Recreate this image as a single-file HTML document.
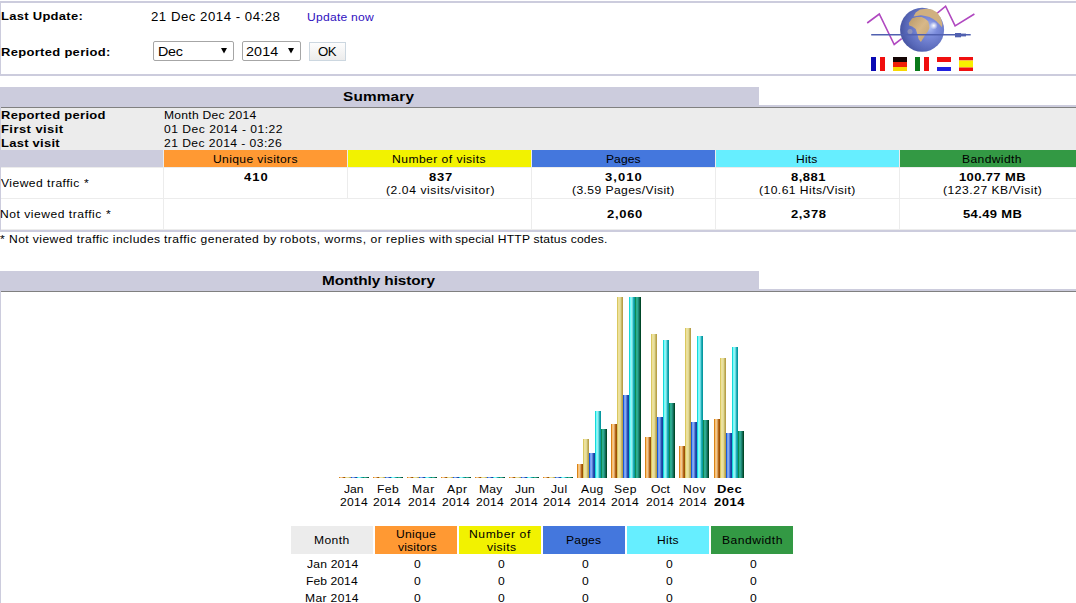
<!DOCTYPE html>
<html><head><meta charset="utf-8">
<style>
html,body{margin:0;padding:0;background:#fff;width:1076px;height:603px;overflow:hidden;position:relative}
div,span{box-sizing:border-box}
.a{position:absolute}
.t{position:absolute;white-space:pre;font-family:"Liberation Sans",sans-serif;font-size:11px;line-height:13px;color:#000}
.b{font-weight:bold}
.c{text-align:center}
.bar{position:absolute;width:6px}
.o{background:linear-gradient(to right,#d88418 0 1px,#ffc070 1px 2px,#f0c890 2px 3px,#d8a060 3px 4px,#b86818 4px 5px,#9a5008 5px 6px)}
.y{background:linear-gradient(to right,#d8c860 0 1px,#f0e098 1px 2px,#e8e0a0 2px 3px,#e0d890 3px 4px,#c8b868 4px 5px,#b8a048 5px 6px)}
.p{background:linear-gradient(to right,#1858d8 0 1px,#70a0f8 1px 2px,#88a8f0 2px 3px,#5880d8 3px 4px,#2850b0 4px 5px,#1840a0 5px 6px)}
.h{background:linear-gradient(to right,#18d8d8 0 1px,#70ffff 1px 2px,#98f0f0 2px 3px,#68d8e0 3px 4px,#20b0b8 4px 5px,#0898a0 5px 6px)}
.g{background:linear-gradient(to right,#108850 0 1px,#28b090 1px 2px,#30a890 2px 3px,#208878 3px 4px,#106850 4px 5px,#004828 5px 6px)}
</style></head><body>

<!-- ===== top box ===== -->
<div class="a" style="left:0;top:1px;width:1076px;height:75px;background:#ccccdd"></div>
<div class="a" style="left:1px;top:3px;width:1075px;height:71px;background:#fff"></div>
<!-- selects -->
<div class="a" style="left:153px;top:41px;width:81px;height:20px;border:1px solid #a6a6a6;border-radius:2px;background:#fff"></div>
<svg class="a" style="left:221px;top:48px" width="6" height="6"><path d="M0 0H6L3 5.5Z" fill="#000"/></svg>
<div class="a" style="left:242px;top:41px;width:59px;height:20px;border:1px solid #a6a6a6;border-radius:2px;background:#fff"></div>
<svg class="a" style="left:288px;top:48px" width="6" height="6"><path d="M0 0H6L3 5.5Z" fill="#000"/></svg>
<div class="a" style="left:309px;top:42px;width:37px;height:19px;border:1px solid #ccd7e0;background:linear-gradient(#fdfdfd,#ececec)"></div>

<!-- logo -->
<svg class="a" style="left:860px;top:0" width="120" height="75" viewBox="0 0 120 75">
  <defs>
    <radialGradient id="gl" cx="0.66" cy="0.45" r="0.75">
      <stop offset="0" stop-color="#b0c0f4"/>
      <stop offset="0.25" stop-color="#7c8cdc"/>
      <stop offset="0.7" stop-color="#5868b8"/>
      <stop offset="1" stop-color="#3c4894"/>
    </radialGradient>
    <radialGradient id="hl" cx="0.5" cy="0.5" r="0.5">
      <stop offset="0" stop-color="#ffffff" stop-opacity="1"/>
      <stop offset="1" stop-color="#ffffff" stop-opacity="0"/>
    </radialGradient>
    <linearGradient id="tan" x1="0" y1="0" x2="1" y2="1">
      <stop offset="0" stop-color="#b89868"/>
      <stop offset="0.5" stop-color="#d8b888"/>
      <stop offset="1" stop-color="#c0a070"/>
    </linearGradient>
  </defs>
  <polyline points="7.2,23 19.3,14 34.2,44.5 41.7,38.6" fill="none" stroke="#b048c0" stroke-width="1.6"/>
  <polyline points="77,13.4 85.6,6.2 95.1,25.9 114.4,14" fill="none" stroke="#b048c0" stroke-width="1.6"/>
  <circle cx="62.1" cy="29.8" r="22" fill="url(#gl)"/>
  <path d="M48.8,23 L52.2,18.2 56.6,16.9 61.7,16.9 65.2,18.7 68.2,21.2 69.1,24.7 69.5,28.1 67.8,31.6 65.2,35 62.6,39.3 60.9,41.9 58.7,39.3 57.4,34.2 55.7,29 52.2,26.4 49.2,25.6Z" fill="url(#tan)"/>
  <path d="M53.5,16.5 L55.7,12.6 60,9.6 66,8.7 72,9.6 77.2,12.6 80.7,17.8 82.4,23.8 82,27.3 79.8,24.7 76.4,21.2 72.9,18.7 69.5,16.9 65.2,16.1 60.9,15.2 56.6,16.1Z" fill="#d0b080"/>
  <circle cx="73.8" cy="25.6" r="4" fill="url(#hl)"/>
  <circle cx="50" cy="31.6" r="2.5" fill="#a0a0b8" opacity="0.7"/>
  <line x1="11.2" y1="34.7" x2="110.7" y2="34.7" stroke="#5060b0" stroke-width="1.5"/>
  <rect x="95" y="33" width="6" height="4.3" fill="#5060b0"/>
  <rect x="101" y="33.6" width="5" height="2.8" fill="#5060b0"/>
  <!-- flags -->
  <rect x="11" y="57" width="5" height="14" fill="#0a0ab4"/><rect x="20" y="57" width="5" height="14" fill="#f00e0e"/>
  <rect x="33" y="57" width="14" height="5" fill="#140404"/><rect x="33" y="62" width="14" height="5" fill="#f02008"/><rect x="33" y="67" width="14" height="4" fill="#f8d800"/>
  <rect x="55" y="57" width="5" height="14" fill="#0a7a1a"/><rect x="64" y="57" width="5" height="14" fill="#f00e0e"/>
  <rect x="77" y="57" width="14" height="5" fill="#f01010"/><rect x="77" y="67" width="14" height="4" fill="#2020e0"/>
  <rect x="99" y="57" width="14" height="3.5" fill="#f01010"/><rect x="99" y="60.5" width="14" height="7" fill="#f8f000"/><rect x="99" y="67.5" width="14" height="3.5" fill="#f01010"/>
</svg>

<!-- ===== summary ===== -->
<div class="a" style="left:0;top:87px;width:759px;height:20px;background:#ccccdd"></div>
<div class="a" style="left:0;top:105px;width:1076px;height:2px;background:#ccccdd"></div>
<div class="a" style="left:0;top:107px;width:1076px;height:125px;background:#ccccdd"></div>
<div class="a" style="left:1px;top:107px;width:1075px;height:1px;background:#808080"></div>
<div class="a" style="left:1px;top:108px;width:1075px;height:122px;background:#ececec"></div>
<!-- header row -->
<div class="a" style="left:1px;top:150px;width:162px;height:17px;background:#ccccdd"></div>
<div class="a" style="left:164px;top:150px;width:183px;height:17px;background:#ff9933"></div>
<div class="a" style="left:348px;top:150px;width:183px;height:17px;background:#f2f200"></div>
<div class="a" style="left:532px;top:150px;width:183px;height:17px;background:#4477dd"></div>
<div class="a" style="left:716px;top:150px;width:183px;height:17px;background:#66eeff"></div>
<div class="a" style="left:900px;top:150px;width:176px;height:17px;background:#339944"></div>
<!-- white rows -->
<div class="a" style="left:1px;top:168px;width:162px;height:30px;background:#fff"></div>
<div class="a" style="left:164px;top:168px;width:183px;height:30px;background:#fff"></div>
<div class="a" style="left:348px;top:168px;width:183px;height:30px;background:#fff"></div>
<div class="a" style="left:532px;top:168px;width:183px;height:30px;background:#fff"></div>
<div class="a" style="left:716px;top:168px;width:183px;height:30px;background:#fff"></div>
<div class="a" style="left:900px;top:168px;width:176px;height:30px;background:#fff"></div>
<div class="a" style="left:1px;top:199px;width:162px;height:30px;background:#fff"></div>
<div class="a" style="left:164px;top:199px;width:367px;height:30px;background:#fff"></div>
<div class="a" style="left:532px;top:199px;width:183px;height:30px;background:#fff"></div>
<div class="a" style="left:716px;top:199px;width:183px;height:30px;background:#fff"></div>
<div class="a" style="left:900px;top:199px;width:176px;height:30px;background:#fff"></div>




<!-- ===== monthly history ===== -->
<div class="a" style="left:0;top:271px;width:759px;height:20px;background:#ccccdd"></div>
<div class="a" style="left:0;top:289px;width:1076px;height:314px;background:#ccccdd"></div>
<div class="a" style="left:1px;top:291px;width:1075px;height:1px;background:#808080"></div>
<div class="a" style="left:1px;top:292px;width:1075px;height:311px;background:#fff"></div>

<div id="bars">
<div class="bar o" style="left:339px;top:477px;height:1px"></div>
<div class="bar y" style="left:345px;top:477px;height:1px"></div>
<div class="bar p" style="left:351px;top:477px;height:1px"></div>
<div class="bar h" style="left:357px;top:477px;height:1px"></div>
<div class="bar g" style="left:363px;top:477px;height:1px"></div>
<div class="bar o" style="left:373px;top:477px;height:1px"></div>
<div class="bar y" style="left:379px;top:477px;height:1px"></div>
<div class="bar p" style="left:385px;top:477px;height:1px"></div>
<div class="bar h" style="left:391px;top:477px;height:1px"></div>
<div class="bar g" style="left:397px;top:477px;height:1px"></div>
<div class="bar o" style="left:407px;top:477px;height:1px"></div>
<div class="bar y" style="left:413px;top:477px;height:1px"></div>
<div class="bar p" style="left:419px;top:477px;height:1px"></div>
<div class="bar h" style="left:425px;top:477px;height:1px"></div>
<div class="bar g" style="left:431px;top:477px;height:1px"></div>
<div class="bar o" style="left:441px;top:477px;height:1px"></div>
<div class="bar y" style="left:447px;top:477px;height:1px"></div>
<div class="bar p" style="left:453px;top:477px;height:1px"></div>
<div class="bar h" style="left:459px;top:477px;height:1px"></div>
<div class="bar g" style="left:465px;top:477px;height:1px"></div>
<div class="bar o" style="left:475px;top:477px;height:1px"></div>
<div class="bar y" style="left:481px;top:477px;height:1px"></div>
<div class="bar p" style="left:487px;top:477px;height:1px"></div>
<div class="bar h" style="left:493px;top:477px;height:1px"></div>
<div class="bar g" style="left:499px;top:477px;height:1px"></div>
<div class="bar o" style="left:509px;top:477px;height:1px"></div>
<div class="bar y" style="left:515px;top:477px;height:1px"></div>
<div class="bar p" style="left:521px;top:477px;height:1px"></div>
<div class="bar h" style="left:527px;top:477px;height:1px"></div>
<div class="bar g" style="left:533px;top:477px;height:1px"></div>
<div class="bar o" style="left:543px;top:477px;height:1px"></div>
<div class="bar y" style="left:549px;top:477px;height:1px"></div>
<div class="bar p" style="left:555px;top:477px;height:1px"></div>
<div class="bar h" style="left:561px;top:477px;height:1px"></div>
<div class="bar g" style="left:567px;top:477px;height:1px"></div>
<div class="bar o" style="left:577px;top:464px;height:14px"></div>
<div class="bar y" style="left:583px;top:439px;height:39px"></div>
<div class="bar p" style="left:589px;top:453px;height:25px"></div>
<div class="bar h" style="left:595px;top:411px;height:67px"></div>
<div class="bar g" style="left:601px;top:429px;height:49px"></div>
<div class="bar o" style="left:611px;top:424px;height:54px"></div>
<div class="bar y" style="left:617px;top:297px;height:181px"></div>
<div class="bar p" style="left:623px;top:395px;height:83px"></div>
<div class="bar h" style="left:629px;top:297px;height:181px"></div>
<div class="bar g" style="left:635px;top:297px;height:181px"></div>
<div class="bar o" style="left:645px;top:437px;height:41px"></div>
<div class="bar y" style="left:651px;top:334px;height:144px"></div>
<div class="bar p" style="left:657px;top:417px;height:61px"></div>
<div class="bar h" style="left:663px;top:340px;height:138px"></div>
<div class="bar g" style="left:669px;top:403px;height:75px"></div>
<div class="bar o" style="left:679px;top:446px;height:32px"></div>
<div class="bar y" style="left:685px;top:328px;height:150px"></div>
<div class="bar p" style="left:691px;top:422px;height:56px"></div>
<div class="bar h" style="left:697px;top:336px;height:142px"></div>
<div class="bar g" style="left:703px;top:420px;height:58px"></div>
<div class="bar o" style="left:714px;top:419px;height:59px"></div>
<div class="bar y" style="left:720px;top:358px;height:120px"></div>
<div class="bar p" style="left:726px;top:433px;height:45px"></div>
<div class="bar h" style="left:732px;top:347px;height:131px"></div>
<div class="bar g" style="left:738px;top:431px;height:47px"></div>
</div>


<!-- bottom table -->
<div class="a" style="left:291px;top:526px;width:82px;height:28px;background:#ececec"></div>
<div class="a" style="left:375px;top:526px;width:82px;height:28px;background:#ff9933"></div>
<div class="a" style="left:459px;top:526px;width:82px;height:28px;background:#f2f200"></div>
<div class="a" style="left:543px;top:526px;width:82px;height:28px;background:#4477dd"></div>
<div class="a" style="left:627px;top:526px;width:82px;height:28px;background:#66eeff"></div>
<div class="a" style="left:711px;top:526px;width:82px;height:28px;background:#339944"></div>

<div class="t" style="left:1.00px;top:10px;font-size:11px;line-height:13px;font-weight:bold;letter-spacing:0.244px;transform:scaleX(1.18);transform-origin:0 0;">Last Update:</div>
<div class="t" style="left:151.00px;top:10px;font-size:12px;line-height:14px;letter-spacing:0.467px;transform:scaleX(1.1);transform-origin:0 0;">21 Dec 2014 - 04:28</div>
<div class="t" style="left:307.10px;top:11px;font-size:11px;line-height:13px;letter-spacing:0.218px;transform:scaleX(1.1);transform-origin:0 0;color:#3010c0">Update now</div>
<div class="t" style="left:1.00px;top:46px;font-size:11px;line-height:13px;font-weight:bold;letter-spacing:0.264px;transform:scaleX(1.18);transform-origin:0 0;">Reported period:</div>
<div class="t" style="left:157.60px;top:44px;font-size:13px;line-height:15px;letter-spacing:-0.280px;transform:scaleX(1.1);transform-origin:0 0;">Dec</div>
<div class="t" style="left:246.30px;top:44px;font-size:13px;line-height:15px;letter-spacing:0.147px;transform:scaleX(1.1);transform-origin:0 0;">2014</div>
<div class="t" style="left:318.00px;top:45px;font-size:12px;line-height:14px;letter-spacing:-0.440px;transform:scaleX(1.1);transform-origin:0 0;">OK</div>
<div class="t" style="left:343.00px;top:89px;font-size:13px;line-height:15px;font-weight:bold;letter-spacing:0.147px;transform:scaleX(1.18);transform-origin:0 0;">Summary</div>
<div class="t" style="left:322.30px;top:273px;font-size:13px;line-height:15px;font-weight:bold;letter-spacing:-0.074px;transform:scaleX(1.18);transform-origin:0 0;">Monthly history</div>
<div class="t" style="left:1.00px;top:109px;font-size:11px;line-height:13px;font-weight:bold;letter-spacing:0.257px;transform:scaleX(1.18);transform-origin:0 0;">Reported period</div>
<div class="t" style="left:1.00px;top:123px;font-size:11px;line-height:13px;font-weight:bold;letter-spacing:0.376px;transform:scaleX(1.18);transform-origin:0 0;">First visit</div>
<div class="t" style="left:1.00px;top:137px;font-size:11px;line-height:13px;font-weight:bold;letter-spacing:0.218px;transform:scaleX(1.18);transform-origin:0 0;">Last visit</div>
<div class="t" style="left:164.00px;top:109px;font-size:11px;line-height:13px;letter-spacing:0.237px;transform:scaleX(1.1);transform-origin:0 0;">Month Dec 2014</div>
<div class="t" style="left:164.00px;top:123px;font-size:11px;line-height:13px;letter-spacing:0.449px;transform:scaleX(1.1);transform-origin:0 0;">01 Dec 2014 - 01:22</div>
<div class="t" style="left:164.00px;top:137px;font-size:11px;line-height:13px;letter-spacing:0.404px;transform:scaleX(1.1);transform-origin:0 0;">21 Dec 2014 - 03:26</div>
<div class="t" style="left:213.10px;top:153px;font-size:11px;line-height:13px;letter-spacing:0.337px;transform:scaleX(1.1);transform-origin:0 0;">Unique visitors</div>
<div class="t" style="left:392.40px;top:153px;font-size:11px;line-height:13px;letter-spacing:0.413px;transform:scaleX(1.1);transform-origin:0 0;">Number of visits</div>
<div class="t" style="left:606.30px;top:153px;font-size:11px;line-height:13px;letter-spacing:0.040px;transform:scaleX(1.1);transform-origin:0 0;">Pages</div>
<div class="t" style="left:796.30px;top:153px;font-size:11px;line-height:13px;letter-spacing:0.147px;transform:scaleX(1.1);transform-origin:0 0;">Hits</div>
<div class="t" style="left:961.80px;top:153px;font-size:11px;line-height:13px;letter-spacing:0.340px;transform:scaleX(1.1);transform-origin:0 0;">Bandwidth</div>
<div class="t" style="left:0.80px;top:177px;font-size:11px;line-height:13px;letter-spacing:0.423px;transform:scaleX(1.1);transform-origin:0 0;">Viewed traffic</div>
<div class="t" style="left:84.20px;top:177px;font-size:11px;line-height:13px;letter-spacing:0.000px;transform:scaleX(1.1);transform-origin:0 0;">*</div>
<div class="t" style="left:0.00px;top:208px;font-size:11px;line-height:13px;letter-spacing:0.465px;transform:scaleX(1.1);transform-origin:0 0;">Not viewed traffic</div>
<div class="t" style="left:106.30px;top:208px;font-size:11px;line-height:13px;letter-spacing:0.000px;transform:scaleX(1.1);transform-origin:0 0;">*</div>
<div class="t" style="left:244.00px;top:171px;font-size:11px;line-height:13px;font-weight:bold;letter-spacing:0.920px;transform:scaleX(1.18);transform-origin:0 0;">410</div>
<div class="t" style="left:428.70px;top:171px;font-size:11px;line-height:13px;font-weight:bold;letter-spacing:0.680px;transform:scaleX(1.18);transform-origin:0 0;">837</div>
<div class="t" style="left:385.60px;top:184px;font-size:11px;line-height:13px;letter-spacing:0.528px;transform:scaleX(1.1);transform-origin:0 0;">(2.04 visits/visitor)</div>
<div class="t" style="left:605.20px;top:171px;font-size:11px;line-height:13px;font-weight:bold;letter-spacing:0.880px;transform:scaleX(1.18);transform-origin:0 0;">3,010</div>
<div class="t" style="left:572.30px;top:184px;font-size:11px;line-height:13px;letter-spacing:0.379px;transform:scaleX(1.1);transform-origin:0 0;">(3.59 Pages/Visit)</div>
<div class="t" style="left:790.90px;top:171px;font-size:11px;line-height:13px;font-weight:bold;letter-spacing:0.400px;transform:scaleX(1.18);transform-origin:0 0;">8,881</div>
<div class="t" style="left:759.30px;top:184px;font-size:11px;line-height:13px;letter-spacing:0.416px;transform:scaleX(1.1);transform-origin:0 0;">(10.61 Hits/Visit)</div>
<div class="t" style="left:959.00px;top:171px;font-size:11px;line-height:13px;font-weight:bold;letter-spacing:0.320px;transform:scaleX(1.18);transform-origin:0 0;">100.77 MB</div>
<div class="t" style="left:942.50px;top:184px;font-size:11px;line-height:13px;letter-spacing:0.470px;transform:scaleX(1.1);transform-origin:0 0;">(123.27 KB/Visit)</div>
<div class="t" style="left:606.60px;top:208px;font-size:11px;line-height:13px;font-weight:bold;letter-spacing:0.600px;transform:scaleX(1.18);transform-origin:0 0;">2,060</div>
<div class="t" style="left:791.10px;top:208px;font-size:11px;line-height:13px;font-weight:bold;letter-spacing:0.520px;transform:scaleX(1.18);transform-origin:0 0;">2,378</div>
<div class="t" style="left:962.60px;top:208px;font-size:11px;line-height:13px;font-weight:bold;letter-spacing:0.314px;transform:scaleX(1.18);transform-origin:0 0;">54.49 MB</div>
<div class="t" style="left:0.00px;top:233px;font-size:11px;line-height:13px;letter-spacing:0.000px;transform:scaleX(1.1);transform-origin:0 0;">*</div>
<div class="t" style="left:9.40px;top:233px;font-size:11px;line-height:13px;letter-spacing:0.377px;transform:scaleX(1.1);transform-origin:0 0;">Not viewed traffic includes</div>
<div class="t" style="left:164.14px;top:233px;font-size:11px;line-height:13px;letter-spacing:0.433px;transform:scaleX(1.1);transform-origin:0 0;">traffic generated by</div>
<div class="t" style="left:279.66px;top:233px;font-size:11px;line-height:13px;letter-spacing:0.467px;transform:scaleX(1.1);transform-origin:0 0;">robots, worms, or replies with</div>
<div class="t" style="left:455.00px;top:233px;font-size:11px;line-height:13px;letter-spacing:0.193px;transform:scaleX(1.1);transform-origin:0 0;">special HTTP status codes.</div>
<div class="t" style="left:396.10px;top:528px;font-size:11px;line-height:13px;letter-spacing:0.232px;transform:scaleX(1.1);transform-origin:0 0;">Unique</div>
<div class="t" style="left:397.80px;top:541px;font-size:11px;line-height:13px;letter-spacing:0.154px;transform:scaleX(1.1);transform-origin:0 0;">visitors</div>
<div class="t" style="left:314.06px;top:534px;font-size:11px;line-height:13px;letter-spacing:0.360px;transform:scaleX(1.1);transform-origin:0 0;">Month</div>
<div class="t" style="left:469.06px;top:528px;font-size:11px;line-height:13px;letter-spacing:0.540px;transform:scaleX(1.1);transform-origin:0 0;">Number of</div>
<div class="t" style="left:486.64px;top:541px;font-size:11px;line-height:13px;letter-spacing:0.392px;transform:scaleX(1.1);transform-origin:0 0;">visits</div>
<div class="t" style="left:566.10px;top:534px;font-size:11px;line-height:13px;letter-spacing:0.160px;transform:scaleX(1.1);transform-origin:0 0;">Pages</div>
<div class="t" style="left:657.06px;top:534px;font-size:11px;line-height:13px;letter-spacing:0.253px;transform:scaleX(1.1);transform-origin:0 0;">Hits</div>
<div class="t" style="left:722.06px;top:534px;font-size:11px;line-height:13px;letter-spacing:0.440px;transform:scaleX(1.1);transform-origin:0 0;">Bandwidth</div>
<div class="t" style="left:344.19px;top:483px;font-size:11px;line-height:13px;letter-spacing:0.040px;transform:scaleX(1.1);transform-origin:0 0;">Jan</div>
<div class="t" style="left:339.64px;top:496px;font-size:11px;line-height:13px;letter-spacing:0.253px;transform:scaleX(1.1);transform-origin:0 0;">2014</div>
<div class="t" style="left:377.36px;top:483px;font-size:11px;line-height:13px;letter-spacing:0.360px;transform:scaleX(1.1);transform-origin:0 0;">Feb</div>
<div class="t" style="left:373.32px;top:496px;font-size:11px;line-height:13px;letter-spacing:0.253px;transform:scaleX(1.1);transform-origin:0 0;">2014</div>
<div class="t" style="left:411.54px;top:483px;font-size:11px;line-height:13px;letter-spacing:0.680px;transform:scaleX(1.1);transform-origin:0 0;">Mar</div>
<div class="t" style="left:407.80px;top:496px;font-size:11px;line-height:13px;letter-spacing:0.253px;transform:scaleX(1.1);transform-origin:0 0;">2014</div>
<div class="t" style="left:446.57px;top:483px;font-size:11px;line-height:13px;letter-spacing:0.600px;transform:scaleX(1.1);transform-origin:0 0;">Apr</div>
<div class="t" style="left:441.96px;top:496px;font-size:11px;line-height:13px;letter-spacing:0.253px;transform:scaleX(1.1);transform-origin:0 0;">2014</div>
<div class="t" style="left:478.64px;top:483px;font-size:11px;line-height:13px;letter-spacing:0.200px;transform:scaleX(1.1);transform-origin:0 0;">May</div>
<div class="t" style="left:475.96px;top:496px;font-size:11px;line-height:13px;letter-spacing:0.253px;transform:scaleX(1.1);transform-origin:0 0;">2014</div>
<div class="t" style="left:514.58px;top:483px;font-size:11px;line-height:13px;letter-spacing:0.120px;transform:scaleX(1.1);transform-origin:0 0;">Jun</div>
<div class="t" style="left:509.96px;top:496px;font-size:11px;line-height:13px;letter-spacing:0.253px;transform:scaleX(1.1);transform-origin:0 0;">2014</div>
<div class="t" style="left:550.79px;top:483px;font-size:11px;line-height:13px;letter-spacing:0.280px;transform:scaleX(1.1);transform-origin:0 0;">Jul</div>
<div class="t" style="left:543.32px;top:496px;font-size:11px;line-height:13px;letter-spacing:0.253px;transform:scaleX(1.1);transform-origin:0 0;">2014</div>
<div class="t" style="left:581.20px;top:483px;font-size:11px;line-height:13px;letter-spacing:0.360px;transform:scaleX(1.1);transform-origin:0 0;">Aug</div>
<div class="t" style="left:577.80px;top:496px;font-size:11px;line-height:13px;letter-spacing:0.253px;transform:scaleX(1.1);transform-origin:0 0;">2014</div>
<div class="t" style="left:614.04px;top:483px;font-size:11px;line-height:13px;letter-spacing:0.440px;transform:scaleX(1.1);transform-origin:0 0;">Sep</div>
<div class="t" style="left:611.32px;top:496px;font-size:11px;line-height:13px;letter-spacing:0.253px;transform:scaleX(1.1);transform-origin:0 0;">2014</div>
<div class="t" style="left:650.86px;top:483px;font-size:11px;line-height:13px;letter-spacing:0.040px;transform:scaleX(1.1);transform-origin:0 0;">Oct</div>
<div class="t" style="left:645.96px;top:496px;font-size:11px;line-height:13px;letter-spacing:0.253px;transform:scaleX(1.1);transform-origin:0 0;">2014</div>
<div class="t" style="left:682.68px;top:483px;font-size:11px;line-height:13px;letter-spacing:0.440px;transform:scaleX(1.1);transform-origin:0 0;">Nov</div>
<div class="t" style="left:679.32px;top:496px;font-size:11px;line-height:13px;letter-spacing:0.253px;transform:scaleX(1.1);transform-origin:0 0;">2014</div>
<div class="t" style="left:716.80px;top:483px;font-size:11px;line-height:13px;font-weight:bold;letter-spacing:0.360px;transform:scaleX(1.18);transform-origin:0 0;">Dec</div>
<div class="t" style="left:713.90px;top:496px;font-size:11px;line-height:13px;font-weight:bold;letter-spacing:0.467px;transform:scaleX(1.18);transform-origin:0 0;">2014</div>
<div class="t" style="left:306.85px;top:558px;font-size:11px;line-height:13px;letter-spacing:0.177px;transform:scaleX(1.1);transform-origin:0 0;">Jan 2014</div>
<div class="t" style="left:413.92px;top:558px;font-size:11px;line-height:13px;letter-spacing:0.200px;transform:scaleX(1.1);transform-origin:0 0;">0</div>
<div class="t" style="left:497.92px;top:558px;font-size:11px;line-height:13px;letter-spacing:0.200px;transform:scaleX(1.1);transform-origin:0 0;">0</div>
<div class="t" style="left:581.92px;top:558px;font-size:11px;line-height:13px;letter-spacing:0.200px;transform:scaleX(1.1);transform-origin:0 0;">0</div>
<div class="t" style="left:665.92px;top:558px;font-size:11px;line-height:13px;letter-spacing:0.200px;transform:scaleX(1.1);transform-origin:0 0;">0</div>
<div class="t" style="left:749.92px;top:558px;font-size:11px;line-height:13px;letter-spacing:0.200px;transform:scaleX(1.1);transform-origin:0 0;">0</div>
<div class="t" style="left:306.05px;top:575px;font-size:11px;line-height:13px;letter-spacing:0.063px;transform:scaleX(1.1);transform-origin:0 0;">Feb 2014</div>
<div class="t" style="left:413.92px;top:575px;font-size:11px;line-height:13px;letter-spacing:0.200px;transform:scaleX(1.1);transform-origin:0 0;">0</div>
<div class="t" style="left:497.92px;top:575px;font-size:11px;line-height:13px;letter-spacing:0.200px;transform:scaleX(1.1);transform-origin:0 0;">0</div>
<div class="t" style="left:581.92px;top:575px;font-size:11px;line-height:13px;letter-spacing:0.200px;transform:scaleX(1.1);transform-origin:0 0;">0</div>
<div class="t" style="left:665.92px;top:575px;font-size:11px;line-height:13px;letter-spacing:0.200px;transform:scaleX(1.1);transform-origin:0 0;">0</div>
<div class="t" style="left:749.92px;top:575px;font-size:11px;line-height:13px;letter-spacing:0.200px;transform:scaleX(1.1);transform-origin:0 0;">0</div>
<div class="t" style="left:305.20px;top:592px;font-size:11px;line-height:13px;letter-spacing:0.314px;transform:scaleX(1.1);transform-origin:0 0;">Mar 2014</div>
<div class="t" style="left:413.92px;top:592px;font-size:11px;line-height:13px;letter-spacing:0.200px;transform:scaleX(1.1);transform-origin:0 0;">0</div>
<div class="t" style="left:497.92px;top:592px;font-size:11px;line-height:13px;letter-spacing:0.200px;transform:scaleX(1.1);transform-origin:0 0;">0</div>
<div class="t" style="left:581.92px;top:592px;font-size:11px;line-height:13px;letter-spacing:0.200px;transform:scaleX(1.1);transform-origin:0 0;">0</div>
<div class="t" style="left:665.92px;top:592px;font-size:11px;line-height:13px;letter-spacing:0.200px;transform:scaleX(1.1);transform-origin:0 0;">0</div>
<div class="t" style="left:749.92px;top:592px;font-size:11px;line-height:13px;letter-spacing:0.200px;transform:scaleX(1.1);transform-origin:0 0;">0</div>
</body></html>
